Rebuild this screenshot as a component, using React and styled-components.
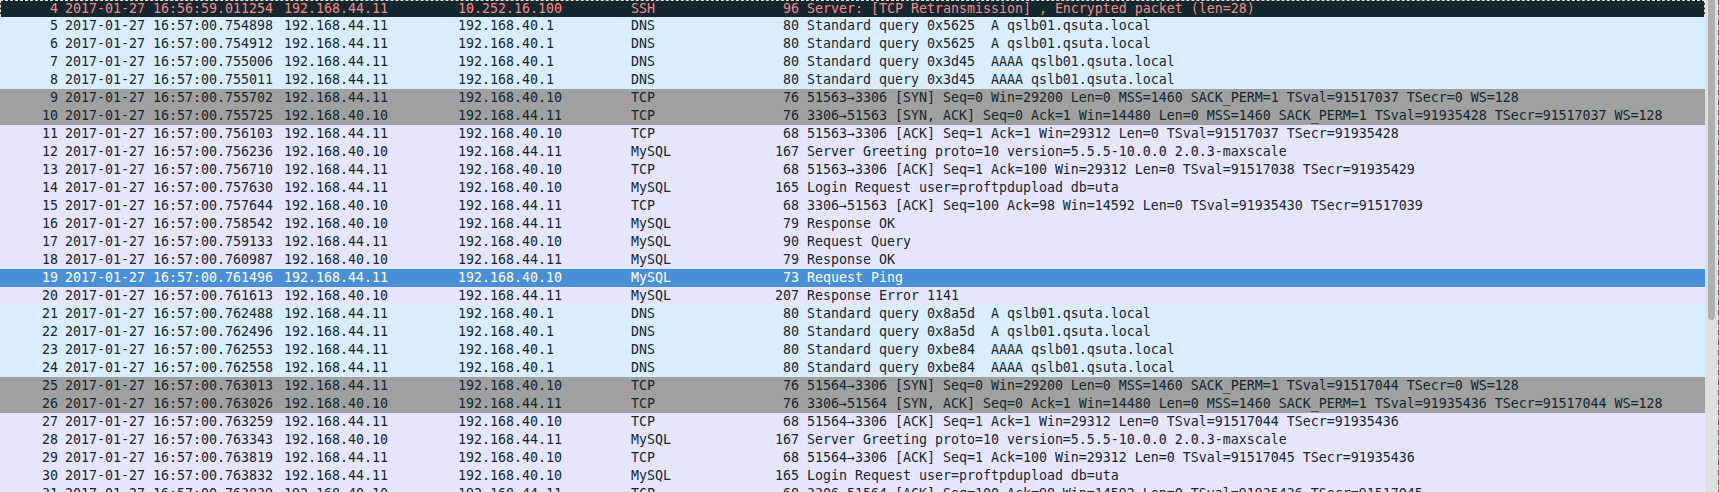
import React from 'react';
import styled, { createGlobalStyle } from 'styled-components';

const GlobalStyle = createGlobalStyle`
  html, body {
    margin: 0;
    padding: 0;
    height: 100%;
    overflow: hidden;
    background: #e0e0e0;
  }
`;

const palette = {
  ssh: { bg: '#12272e', fg: '#f78787' },
  dns: { bg: '#daeeff', fg: '#12272e' },
  syn: { bg: '#a0a0a0', fg: '#12272e' },
  tcp: { bg: '#e7e6ff', fg: '#12272e' },
  sel: { bg: '#4a90d9', fg: '#ffffff' },
};

const Window = styled.div`
  display: flex;
  width: 1719px;
  height: 492px;
  overflow: hidden;
`;

const PacketList = styled.div`
  width: 1705px;
  height: 492px;
  overflow: hidden;
  flex: none;
`;

const Row = styled.div`
  display: grid;
  grid-template-columns: 58px 219px 174px 173px 136px 39px 1fr;
  height: 18px;
  box-sizing: border-box;
  font-family: "DejaVu Sans Mono", monospace;
  font-size: 13.29px;
  line-height: 18px;
  white-space: pre;
  background: ${(p) => palette[p.$kind].bg};
  color: ${(p) => palette[p.$kind].fg};
  &:first-child {
    height: 17px;
    line-height: 17px;
    position: relative;
  }
`;

const FocusDash = styled.div`
  position: absolute;
  inset: 0;
  border: 1px dashed #e8e0d0;
  border-bottom: none;
  pointer-events: none;
`;

const Cell = styled.span`
  padding-left: ${(p) => p.$pad ?? 7}px;
  text-align: ${(p) => (p.$right ? 'right' : 'left')};
`;

const Gutter = styled.div`
  position: relative;
  flex: 1;
  background: #e0e0e0;
`;

const Thumb = styled.div`
  position: absolute;
  left: 3px;
  top: 0;
  width: 7px;
  height: 320px;
  border-radius: 0 0 4px 4px;
  background: #b0b0b0;
`;

const EdgeLine = styled.div`
  position: absolute;
  right: 0;
  top: 0;
  bottom: 0;
  width: 1px;
  background: repeating-linear-gradient(
    to bottom,
    #2f6d96 0 5px,
    #e0b080 5px 10px
  );
`;

const dnsInfo = (id, type) => `Standard query ${id}  ${type} qslb01.qsuta.local`;
const A = '192.168.44.11';
const B = '192.168.40.10';
const C = '192.168.40.1';

const rows = [
  [4, '16:56:59.011254', A, '10.252.16.100', 'SSH', 96, 'Server: [TCP Retransmission] , Encrypted packet (len=28)', 'ssh'],
  [5, '16:57:00.754898', A, C, 'DNS', 80, dnsInfo('0x5625', 'A'), 'dns'],
  [6, '16:57:00.754912', A, C, 'DNS', 80, dnsInfo('0x5625', 'A'), 'dns'],
  [7, '16:57:00.755006', A, C, 'DNS', 80, dnsInfo('0x3d45', 'AAAA'), 'dns'],
  [8, '16:57:00.755011', A, C, 'DNS', 80, dnsInfo('0x3d45', 'AAAA'), 'dns'],
  [9, '16:57:00.755702', A, B, 'TCP', 76, '51563→3306 [SYN] Seq=0 Win=29200 Len=0 MSS=1460 SACK_PERM=1 TSval=91517037 TSecr=0 WS=128', 'syn'],
  [10, '16:57:00.755725', B, A, 'TCP', 76, '3306→51563 [SYN, ACK] Seq=0 Ack=1 Win=14480 Len=0 MSS=1460 SACK_PERM=1 TSval=91935428 TSecr=91517037 WS=128', 'syn'],
  [11, '16:57:00.756103', A, B, 'TCP', 68, '51563→3306 [ACK] Seq=1 Ack=1 Win=29312 Len=0 TSval=91517037 TSecr=91935428', 'tcp'],
  [12, '16:57:00.756236', B, A, 'MySQL', 167, 'Server Greeting proto=10 version=5.5.5-10.0.0 2.0.3-maxscale', 'tcp'],
  [13, '16:57:00.756710', A, B, 'TCP', 68, '51563→3306 [ACK] Seq=1 Ack=100 Win=29312 Len=0 TSval=91517038 TSecr=91935429', 'tcp'],
  [14, '16:57:00.757630', A, B, 'MySQL', 165, 'Login Request user=proftpdupload db=uta', 'tcp'],
  [15, '16:57:00.757644', B, A, 'TCP', 68, '3306→51563 [ACK] Seq=100 Ack=98 Win=14592 Len=0 TSval=91935430 TSecr=91517039', 'tcp'],
  [16, '16:57:00.758542', B, A, 'MySQL', 79, 'Response OK', 'tcp'],
  [17, '16:57:00.759133', A, B, 'MySQL', 90, 'Request Query', 'tcp'],
  [18, '16:57:00.760987', B, A, 'MySQL', 79, 'Response OK', 'tcp'],
  [19, '16:57:00.761496', A, B, 'MySQL', 73, 'Request Ping', 'sel'],
  [20, '16:57:00.761613', B, A, 'MySQL', 207, 'Response Error 1141', 'tcp'],
  [21, '16:57:00.762488', A, C, 'DNS', 80, dnsInfo('0x8a5d', 'A'), 'dns'],
  [22, '16:57:00.762496', A, C, 'DNS', 80, dnsInfo('0x8a5d', 'A'), 'dns'],
  [23, '16:57:00.762553', A, C, 'DNS', 80, dnsInfo('0xbe84', 'AAAA'), 'dns'],
  [24, '16:57:00.762558', A, C, 'DNS', 80, dnsInfo('0xbe84', 'AAAA'), 'dns'],
  [25, '16:57:00.763013', A, B, 'TCP', 76, '51564→3306 [SYN] Seq=0 Win=29200 Len=0 MSS=1460 SACK_PERM=1 TSval=91517044 TSecr=0 WS=128', 'syn'],
  [26, '16:57:00.763026', B, A, 'TCP', 76, '3306→51564 [SYN, ACK] Seq=0 Ack=1 Win=14480 Len=0 MSS=1460 SACK_PERM=1 TSval=91935436 TSecr=91517044 WS=128', 'syn'],
  [27, '16:57:00.763259', A, B, 'TCP', 68, '51564→3306 [ACK] Seq=1 Ack=1 Win=29312 Len=0 TSval=91517044 TSecr=91935436', 'tcp'],
  [28, '16:57:00.763343', B, A, 'MySQL', 167, 'Server Greeting proto=10 version=5.5.5-10.0.0 2.0.3-maxscale', 'tcp'],
  [29, '16:57:00.763819', A, B, 'TCP', 68, '51564→3306 [ACK] Seq=1 Ack=100 Win=29312 Len=0 TSval=91517045 TSecr=91935436', 'tcp'],
  [30, '16:57:00.763832', A, B, 'MySQL', 165, 'Login Request user=proftpdupload db=uta', 'tcp'],
  [31, '16:57:00.763839', B, A, 'TCP', 68, '3306→51564 [ACK] Seq=100 Ack=98 Win=14592 Len=0 TSval=91935436 TSecr=91517045', 'tcp'],
];

export default function App() {
  return (
    <Window>
      <GlobalStyle />
      <PacketList>
        {rows.map(([no, time, src, dst, proto, len, info, kind]) => (
          <Row key={no} $kind={kind}>
            {kind === 'ssh' && <FocusDash />}
            <Cell $right $pad={0}>{no}</Cell>
            <Cell>2017-01-27 {time}</Cell>
            <Cell>{src}</Cell>
            <Cell>{dst}</Cell>
            <Cell>{proto}</Cell>
            <Cell $right $pad={0}>{len}</Cell>
            <Cell $pad={8}>{info}</Cell>
          </Row>
        ))}
      </PacketList>
      <Gutter>
        <Thumb />
        <EdgeLine />
      </Gutter>
    </Window>
  );
}
